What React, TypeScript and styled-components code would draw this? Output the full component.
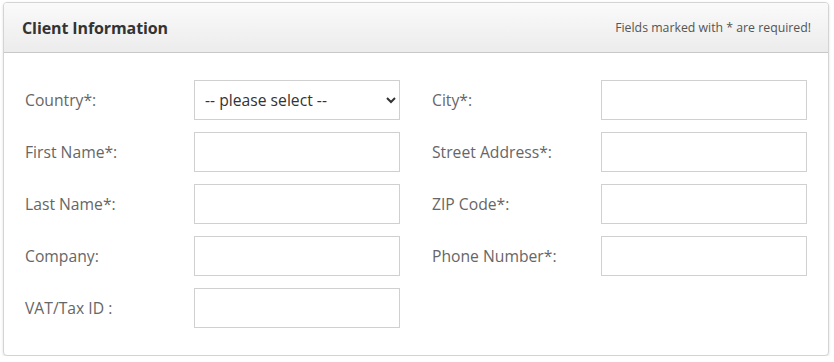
import React from "react";
import styled, { createGlobalStyle } from "styled-components";

const Global = createGlobalStyle`
  html, body { margin: 0; padding: 0; background: #fff; }
  body { font-family: "Open Sans", "Liberation Sans", sans-serif; }
  * { box-sizing: border-box; }
`;

const Page = styled.div`
  padding: 2px 5px 0 3px;
`;

const Panel = styled.section`
  width: 826px;
  height: 354px;
  border: 1px solid #d4d4d4;
  border-radius: 4px;
  box-shadow: 0 1px 3px rgba(0, 0, 0, 0.12);
  background: #fff;
  overflow: hidden;
`;

const Header = styled.header`
  height: 50px;
  display: flex;
  align-items: center;
  justify-content: space-between;
  padding: 0 17px 0 18px;
  background: linear-gradient(to bottom, #fafafa 0%, #ececec 100%);
  border-bottom: 1px solid #c8c8c8;
`;

const Title = styled.h2`
  margin: 0;
  font-size: 16px;
  font-weight: 700;
  color: #333;
  letter-spacing: -0.1px;
`;

const Note = styled.span`
  font-size: 12.3px;
  color: #555;
`;

const Body = styled.div`
  display: grid;
  grid-template-columns: 375px 375px;
  column-gap: 32px;
  padding: 27px 21px 0 21px;
`;

const Column = styled.div`
  display: flex;
  flex-direction: column;
  gap: 12px;
`;

const Row = styled.div`
  display: grid;
  grid-template-columns: 169px 206px;
  align-items: center;
  height: 40px;
`;

const Label = styled.label`
  font-size: 15.7px;
  color: #666;
`;

const Input = styled.input`
  width: 206px;
  height: 40px;
  border: 1px solid #d0d0d0;
  background: #fff;
  padding: 0 10px;
  font-family: inherit;
  font-size: 15px;
  outline: none;
`;

const Select = styled.select`
  width: 206px;
  height: 40px;
  border: 1px solid #d0d0d0;
  background: #fff;
  padding: 0 6px;
  font-family: inherit;
  font-size: 15.7px;
  color: #333;
  outline: none;
  border-radius: 0;
`;

const left = ["First Name*:", "Last Name*:", "Company:", "VAT/Tax ID :"];
const right = ["City*:", "Street Address*:", "ZIP Code*:", "Phone Number*:"];

export default function App() {
  return (
    <>
      <Global />
      <Page>
        <Panel>
          <Header>
            <Title>Client Information</Title>
            <Note>Fields marked with * are required!</Note>
          </Header>
          <Body>
            <Column>
              <Row>
                <Label>Country*:</Label>
                <Select defaultValue="">
                  <option value="">-- please select --</option>
                </Select>
              </Row>
              {left.map((l) => (
                <Row key={l}>
                  <Label>{l}</Label>
                  <Input type="text" />
                </Row>
              ))}
            </Column>
            <Column>
              {right.map((l) => (
                <Row key={l}>
                  <Label>{l}</Label>
                  <Input type="text" />
                </Row>
              ))}
            </Column>
          </Body>
        </Panel>
      </Page>
    </>
  );
}
